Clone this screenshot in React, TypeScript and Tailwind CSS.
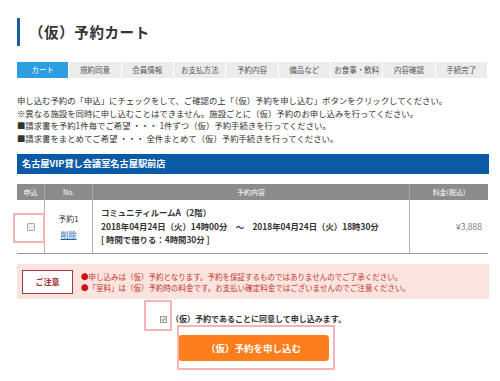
import React from 'react';

const TABS = ['カート', '規約同意', '会員情報', 'お支払方法', '予約内容', '備品など', 'お食事・飲料', '内容確認', '手続完了'];

const GUIDE = [
  '申し込む予約の「申込」にチェックをして、ご確認の上「（仮）予約を申し込む」ボタンをクリックしてください。',
  '※異なる施設を同時に申し込むことはできません。施設ごとに（仮）予約のお申し込みを行ってください。',
  '■請求書を予約1件毎でご希望 ・・・ 1件ずつ（仮）予約手続きを行ってください。',
  '■請求書をまとめてご希望 ・・・ 全件まとめて（仮）予約手続きを行ってください。',
];

const NOTES = [
  '申し込みは（仮）予約となります。予約を保証するものではありませんのでご了承ください。',
  '「室料」は（仮）予約時の料金です。お支払い確定料金ではございませんのでご注意ください。',
];

export default function App() {
  return (
    <div
      className="w-[500px] h-[381px] overflow-hidden bg-white pl-[17px] pr-[11px] pt-[18px] text-[#333]"
      style={{ fontFamily: '"Noto Sans CJK JP", "Noto Sans", sans-serif' }}
    >
      {/* Title */}
      <div className="flex items-center h-[28px] border-l-[3px] border-[#1d5e9e] pl-[9px]">
        <h1 className="text-[14.5px] font-bold leading-none tracking-[0.6px]">（仮）予約カート</h1>
      </div>

      {/* Step tabs */}
      <div className="mt-[16px] grid grid-cols-9 gap-[1px] w-[470px]">
        {TABS.map((t, i) => (
          <div
            key={t}
            className={
              i === 0
                ? 'h-[16px] flex items-center justify-center text-[7.5px] bg-[#2d9fe0] text-white'
                : 'h-[16px] flex items-center justify-center text-[7.5px] bg-[#ececec] text-[#555]'
            }
          >
            {t}
          </div>
        ))}
      </div>

      {/* Guide text */}
      <div className="mt-[16px] text-[8.4px] leading-[12.5px] whitespace-nowrap">
        {GUIDE.map((g) => (
          <p key={g}>{g}</p>
        ))}
      </div>

      {/* Venue */}
      <div className="mt-[10px] w-[472px] h-[20px] bg-[#0b5aa6] flex items-center pl-[5px]">
        <span className="text-white text-[9.2px] font-bold">名古屋VIP貸し会議室名古屋駅前店</span>
      </div>

      {/* Table */}
      <div className="mt-[10px] w-[471px]">
        <div className="grid grid-cols-[27px_48px_317px_79px] h-[16px] bg-[#8c8c8c] text-white text-[7px]">
          <div className="flex items-center justify-center">申込</div>
          <div className="flex items-center justify-center border-l border-[#a8a8a8]">No.</div>
          <div className="flex items-center justify-center border-l border-[#a8a8a8]">予約内容</div>
          <div className="flex items-center justify-center border-l border-[#a8a8a8]">料金(税込)</div>
        </div>
        <div className="grid grid-cols-[27px_48px_317px_79px] h-[54px] border-b border-[#9a9a9a]">
          <div className="relative flex items-center justify-center">
            <span className="w-[8px] h-[8px] border border-[#aaa] bg-[#f0f0f0] rounded-[1px]" />
            <span className="absolute left-[-4px] top-[13px] w-[32px] h-[30px] border-2 border-[#f7b3b8]" />
          </div>
          <div className="flex flex-col items-center justify-center gap-[4px] border-l border-[#b0b0b0] text-[8px]">
            <span>予約1</span>
            <span className="text-[#1a64b5] underline">削除</span>
          </div>
          <div className="flex flex-col justify-center pl-[8px] border-l border-[#b0b0b0] text-[8.4px] font-bold leading-[13.5px] whitespace-nowrap">
            <span>コミュニティルームA（2階）</span>
            <span>2018年04月24日（火）14時00分　～　2018年04月24日（火）18時30分</span>
            <span>[ 時間で借りる：4時間30分 ]</span>
          </div>
          <div className="flex items-center justify-end pr-[6px] border-l border-[#b0b0b0] text-[8.5px] text-[#777]">
            ¥3,888
          </div>
        </div>
      </div>

      {/* Notice */}
      <div className="mt-[10px] w-[472px] h-[35px] bg-[#fbe4e0] flex items-center pl-[5px] gap-[8px]">
        <div className="w-[51px] h-[24px] bg-white border border-[#a23a3a] flex items-center justify-center text-[8px] font-bold text-[#9e2a2a]">
          ご注意
        </div>
        <div className="text-[7.5px] leading-[11px] text-[#c0392b] whitespace-nowrap">
          {NOTES.map((n) => (
            <p key={n}>
              <span className="text-[#cc1010]">●</span>
              {n}
            </p>
          ))}
        </div>
      </div>

      {/* Agree */}
      <div className="mt-[14px] flex items-center gap-[4px] pl-[143px]">
        <span className="relative w-[7px] h-[7px] border border-[#999] bg-[#eee] flex items-center justify-center">
          <svg viewBox="0 0 10 10" className="w-[7px] h-[7px]">
            <path d="M2 5.2 L4.2 7.4 L8.2 2.6" fill="none" stroke="#333" strokeWidth="1.6" />
          </svg>
          <span className="absolute left-[-17px] top-[-17px] w-[28px] h-[31px] border-2 border-[#f7b3b8]" />
        </span>
        <span className="text-[8px] font-bold">（仮）予約であることに同意して申し込みます。</span>
      </div>

      {/* Submit */}
      <div className="mt-[8px] pl-[161px]">
        <div className="relative w-[151px]">
          <button className="w-[151px] h-[26px] rounded-[4px] bg-[#fd7e1c] text-white text-[9.5px] font-bold">
            （仮）予約を申し込む
          </button>
          <span className="absolute left-[-1px] top-[-8px] w-[158px] h-[45px] border-2 border-[#f7b3b8]" />
        </div>
      </div>
    </div>
  );
}
